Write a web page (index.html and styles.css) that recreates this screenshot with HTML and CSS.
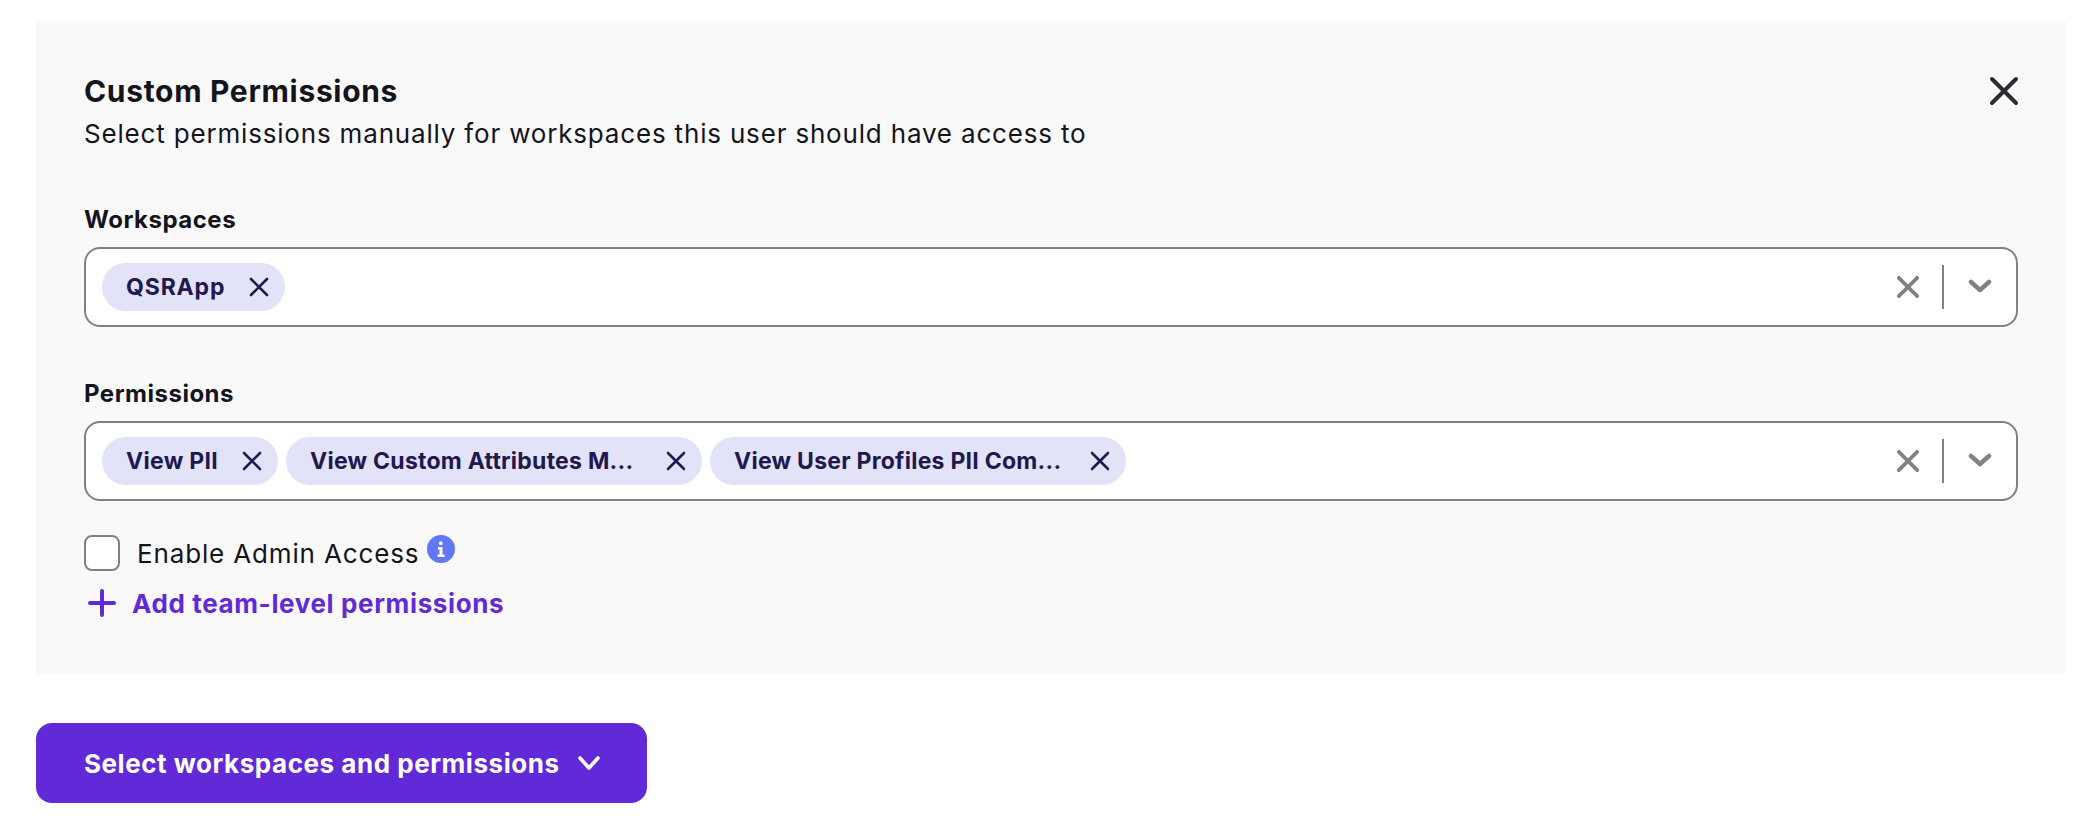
FILE: index.html
```html
<!DOCTYPE html>
<html lang="en">
<head>
<meta charset="utf-8">
<title>Custom Permissions</title>
<link rel="stylesheet" href="styles.css">
</head>
<body>
<main class="page">
  <section class="panel">
    <header class="panel-head">
      <div>
        <h2 class="title">Custom Permissions</h2>
        <p class="subtitle">Select permissions manually for workspaces this user should have access to</p>
      </div>
      <svg class="close" viewBox="0 0 32 32"><path d="M4 4 28 28M28 4 4 28"/></svg>
    </header>

    <div class="field field-workspaces">
      <label class="label">Workspaces</label>
      <div class="select">
        <div class="chips">
          <span class="chip"><span class="chip-text chip-text-caps">QSRApp</span><svg class="chip-x" viewBox="0 0 20 20"><path d="M2 2 18 18M18 2 2 18"/></svg></span>
        </div>
        <svg class="clear" viewBox="0 0 24 24"><path d="M2 2 22 22M22 2 2 22"/></svg>
        <span class="divider"></span>
        <svg class="caret" viewBox="0 0 24 16"><path d="M3 3 12 11 21 3"/></svg>
      </div>
    </div>

    <div class="field field-permissions">
      <label class="label">Permissions</label>
      <div class="select">
        <div class="chips">
          <span class="chip"><span class="chip-text chip-text-short">View PII</span><svg class="chip-x" viewBox="0 0 20 20"><path d="M2 2 18 18M18 2 2 18"/></svg></span>
          <span class="chip"><span class="chip-text chip-text-long">View Custom Attributes M...</span><svg class="chip-x" viewBox="0 0 20 20"><path d="M2 2 18 18M18 2 2 18"/></svg></span>
          <span class="chip"><span class="chip-text chip-text-long">View User Profiles PII Com...</span><svg class="chip-x" viewBox="0 0 20 20"><path d="M2 2 18 18M18 2 2 18"/></svg></span>
        </div>
        <svg class="clear" viewBox="0 0 24 24"><path d="M2 2 22 22M22 2 2 22"/></svg>
        <span class="divider"></span>
        <svg class="caret" viewBox="0 0 24 16"><path d="M3 3 12 11 21 3"/></svg>
      </div>
    </div>

    <div class="admin">
      <span class="checkbox"></span>
      <span class="admin-text">Enable Admin Access</span>
      <svg class="info" viewBox="0 0 28 28"><circle cx="14" cy="14" r="14"/><rect class="info-mark" x="12" y="6.5" width="3.5" height="3.5" rx="1"/><path class="info-mark" d="M11 12h4.5v7.5h2v2.500h-7v-2.500h2v-5h-1.500z"/></svg>
    </div>

    <a class="add">
      <svg class="plus" viewBox="0 0 28 28"><path d="M14 2V26M2 14H26"/></svg>
      <span>Add team-level permissions</span>
    </a>
  </section>

  <button class="submit">
    <span>Select workspaces and permissions</span>
    <svg class="submit-caret" viewBox="0 0 24 16"><path d="M3 3 12 13 21 3"/></svg>
  </button>
</main>
</body>
</html>
```
FILE: styles.css
```css
* { box-sizing: border-box; }
html, body { margin: 0; background: #fff; }
body {
  font-family: "Inter", "Liberation Sans", sans-serif;
  color: #14141c;
  height: 828px;
  overflow: hidden;
}
.page {
  display: flex;
  flex-direction: column;
  align-items: flex-start;
  padding: 21px 24px 0 36px;
}
.panel {
  width: 2030px;
  height: 653px;
  background: #f9f9f9;
  padding: 49px 48px 0;
}
.panel-head {
  display: flex;
  justify-content: space-between;
  align-items: flex-start;
  height: 85px;
}
.title {
  margin: 0;
  font-size: 30px;
  line-height: 43px;
  font-weight: 700;
  letter-spacing: 0.68px;
}
.subtitle {
  margin: 0;
  font-size: 26px;
  line-height: 42px;
  font-weight: 400;
  letter-spacing: 0.82px;
}
.close {
  width: 32px;
  height: 32px;
  margin: 5px -2px 0 0;
  fill: none;
  stroke: #2b2b33;
  stroke-width: 4;
  stroke-linecap: round;
}
.field-workspaces { margin-top: 45px; }
.field-permissions { margin-top: 47px; }
.label {
  display: block;
  height: 47px;
  font-size: 24px;
  line-height: 40px;
  font-weight: 700;
  letter-spacing: 0.5px;
}
.select {
  display: flex;
  align-items: center;
  width: 1934px;
  height: 80px;
  background: #fff;
  border: 2px solid #808085;
  border-radius: 16px;
  padding-left: 16px;
}
.chips { display: flex; gap: 8px; flex: 1; }
.chip {
  display: inline-flex;
  align-items: center;
  height: 48px;
  border-radius: 24px;
  background: #e2e2f8;
  padding: 0 16px 0 24px;
  color: #21184f;
  font-size: 23px;
  font-weight: 700;
  letter-spacing: 0.25px;
  white-space: nowrap;
}
.chip-text-caps { letter-spacing: 0.85px; }
.chip-text-short { letter-spacing: 0.3px; }
.chip-text-long { width: 332px; }
.chip-x {
  width: 20px;
  height: 20px;
  margin-left: 24px;
  fill: none;
  stroke: #21184f;
  stroke-width: 2.6;
  stroke-linecap: round;
}
.clear {
  width: 22px;
  height: 22px;
  fill: none;
  stroke: #808085;
  stroke-width: 4;
  stroke-linecap: round;
}
.divider {
  width: 2px;
  height: 44px;
  background: #808085;
  margin-left: 23px;
}
.caret {
  width: 24px;
  height: 16px;
  margin: 0 24px;
  fill: none;
  stroke: #808085;
  stroke-width: 4.5;
  stroke-linecap: round;
  stroke-linejoin: round;
}
.admin {
  display: flex;
  align-items: center;
  margin-top: 34px;
  height: 36px;
}
.checkbox {
  width: 36px;
  height: 36px;
  background: #fff;
  border: 2px solid #808085;
  border-radius: 8px;
}
.admin-text {
  margin-left: 17px;
  font-size: 26px;
  letter-spacing: 0.85px;
}
.info {
  width: 28px;
  height: 28px;
  margin: -8px 0 0 8px;
  fill: #6177f5;
}
.info-mark { fill: #fff; }
.add {
  display: flex;
  align-items: center;
  margin-top: 12px;
  height: 40px;
  color: #6229d8;
  font-size: 26px;
  font-weight: 700;
  letter-spacing: 0.63px;
}
.plus {
  width: 28px;
  height: 28px;
  margin: 0 16px 0 4px;
  fill: none;
  stroke: #6229d8;
  stroke-width: 4;
  stroke-linecap: round;
}
.submit {
  display: flex;
  align-items: center;
  margin-top: 49px;
  width: 611px;
  height: 80px;
  padding: 0 0 0 48px;
  border: 0;
  border-radius: 16px;
  background: #6229d8;
  color: #fff;
  font-family: inherit;
  font-size: 26px;
  font-weight: 700;
  letter-spacing: 0.54px;
}
.submit-caret {
  width: 24px;
  height: 16px;
  margin-left: 17px;
  fill: none;
  stroke: #fff;
  stroke-width: 3.6;
  stroke-linecap: round;
  stroke-linejoin: round;
}
```
